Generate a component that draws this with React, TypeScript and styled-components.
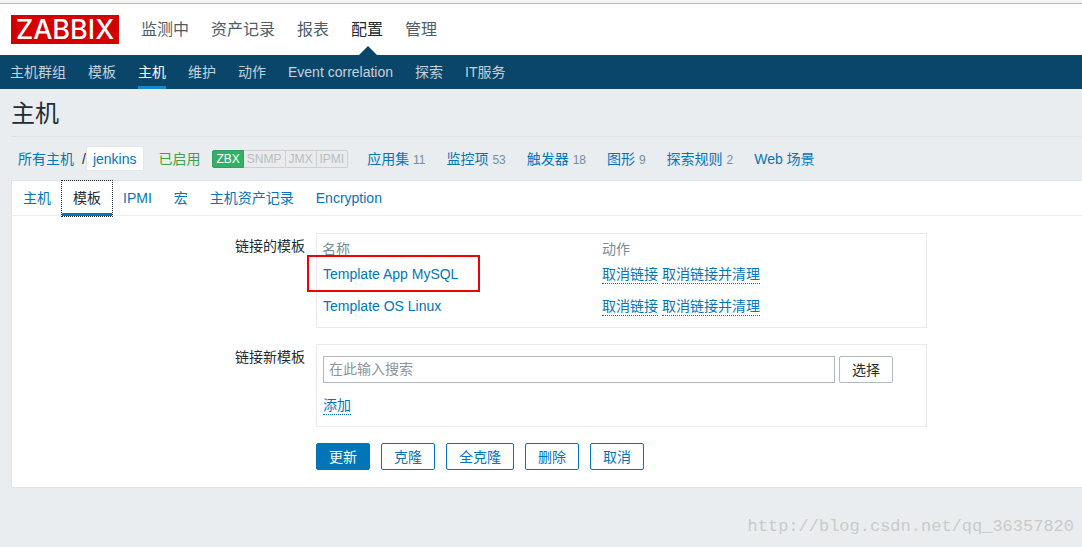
import React from "react";
import styled, { createGlobalStyle } from "styled-components";

const GlobalStyle = createGlobalStyle`
  *, *::before, *::after { box-sizing: border-box; }
  body {
    margin: 0;
    background: #e9edf0;
    color: #1f2c33;
    font: 14px/20px "Liberation Sans", "Noto Sans CJK SC", sans-serif;
  }
  a { color: #0275b8; text-decoration: none; }
`;

const Page = styled.div`
  display: flex;
  flex-direction: column;
  min-height: 100vh;
`;

const WindowEdge = styled.div`
  height: 4px;
  background: #f4f4f4;
  border-bottom: 1px solid #bcbcbc;
`;

const TopBar = styled.header`
  display: flex;
  align-items: center;
  gap: 22px;
  height: 51px;
  padding-left: 11px;
  background: #fff;
`;

const Logo = styled.a`
  display: block;
  width: 108px;
  height: 29px;
  background: #d40000;
  color: #fff;
  font: 500 27px/29px Inter, sans-serif;
  text-align: center;
  white-space: nowrap;
`;

const MainMenu = styled.nav`
  display: flex;
  gap: 22px;
  align-self: stretch;
`;

const MainItem = styled.a<{ $active?: boolean }>`
  position: relative;
  color: ${(p) => (p.$active ? "#1f2c33" : "#4f5d66")};
  font-size: 16px;
  line-height: 51px;
  white-space: nowrap;

  &::after {
    content: "";
    display: ${(p) => (p.$active ? "block" : "none")};
    position: absolute;
    bottom: 0;
    left: 50%;
    margin-left: -8px;
    border: 9px solid transparent;
    border-top-width: 0;
    border-bottom-color: #0a466a;
  }
`;

const SubMenu = styled.nav`
  display: flex;
  gap: 22px;
  height: 34px;
  padding-left: 10px;
  background: #0a466a;
`;

const SubItem = styled.a<{ $active?: boolean }>`
  height: 34px;
  border-bottom: 3px solid ${(p) => (p.$active ? "#1488c9" : "transparent")};
  color: ${(p) => (p.$active ? "#fff" : "#c5d3dc")};
  line-height: 34px;
  white-space: nowrap;
`;

const Content = styled.main`
  padding-left: 11px;
`;

const Title = styled.h1`
  margin: 0;
  height: 48px;
  border-bottom: 1px solid #dfe4e7;
  font-size: 24px;
  font-weight: 400;
  line-height: 50px;
`;

const HostBar = styled.div`
  display: flex;
  align-items: center;
  gap: 12px;
  height: 43px;
  padding-left: 7px;
  white-space: nowrap;
`;

const Crumbs = styled.div`
  display: flex;
  align-items: center;
`;

const Slash = styled.span`
  padding-left: 8px;
`;

const HostName = styled.a`
  padding: 1px 7px 0 6px;
  border: 1px solid #e2e7ea;
  border-radius: 2px;
  background: #fff;
  line-height: 22px;
`;

const Enabled = styled.span`
  padding-left: 2px;
  color: #429e47;
`;

const Badges = styled.div`
  display: flex;
`;

const Badge = styled.span<{ $on?: boolean }>`
  height: 18px;
  padding: 0 3px;
  border: 1px solid ${(p) => (p.$on ? "#2f9f5e" : "#c8d1d6")};
  border-left-width: ${(p) => (p.$on ? "1px" : "0")};
  background: ${(p) => (p.$on ? "#34af67" : "#ebebeb")};
  color: ${(p) => (p.$on ? "#fff" : "#b3bfc6")};
  font-size: 12px;
  line-height: 17px;

  &:first-child { border-radius: 2px 0 0 2px; }
  &:last-child { border-radius: 0 2px 2px 0; }
`;

const HostLinks = styled.nav`
  display: flex;
  gap: 21px;
  padding: 2px 0 0 7px;
`;

const Count = styled.span`
  color: #768d99;
  font-size: 12px;
`;

const Card = styled.section`
  border: 1px solid #dfe4e7;
  border-right: 0;
  background: #fff;
`;

const Tabs = styled.nav`
  display: flex;
  height: 35px;
  border-bottom: 1px solid #ebeef0;
`;

const Tab = styled.a<{ $active?: boolean }>`
  height: 35px;
  padding: 0 11px;
  border-bottom: 3px solid ${(p) => (p.$active ? "#0275b8" : "transparent")};
  outline: ${(p) => (p.$active ? "1px dotted #1f2c33" : "none")};
  color: ${(p) => (p.$active ? "#1f2c33" : "#0275b8")};
  line-height: 34px;
  white-space: nowrap;
`;

const Form = styled.form`
  display: grid;
  grid-template-columns: 293px minmax(0, 611px);
  column-gap: 11px;
  row-gap: 16px;
  padding: 17px 0;
`;

const FieldName = styled.label`
  padding-top: 3px;
  text-align: right;
`;

const Box = styled.div`
  border: 1px solid #ebebeb;
`;

const LinkedBox = styled(Box)`
  height: 95px;
  padding: 5px;
`;

const SearchBox = styled(Box)`
  height: 83px;
  padding: 11px 6px;
`;

const TemplateTable = styled.table`
  width: 100%;
  border-collapse: collapse;
  table-layout: fixed;

  th {
    height: 20px;
    padding: 0;
    color: #768d99;
    font-weight: 400;
    text-align: left;
  }
  th:first-child { width: 280px; }
  td {
    height: 32px;
    padding: 0 0 2px 0;
  }
`;

const NameCell = styled.td`
  position: relative;

  a { padding-left: 1px; }
`;

const Highlight = styled.span`
  position: absolute;
  top: -4px;
  left: -15px;
  width: 173px;
  height: 37px;
  border: 2px solid #f20000;
  pointer-events: none;
`;

const ActionLink = styled.button`
  height: 18px;
  margin: 0 4px 0 0;
  padding: 0 0 2px;
  border: 0;
  border-bottom: 1px dotted #0275b8;
  background: none;
  color: #0275b8;
  font: inherit;
  line-height: 16px;
  vertical-align: middle;
`;

const SearchRow = styled.div`
  display: flex;
  gap: 4px;
  margin-bottom: 12px;
`;

const SearchInput = styled.input`
  flex: 0 1 512px;
  min-width: 0;
  height: 27px;
  padding: 0 5px 1px;
  border: 1px solid #acbbc2;
  color: #1f2c33;
  font: inherit;

  &::placeholder { color: #8a949a; opacity: 1; }
`;

const Button = styled.button<{ $kind?: "primary" | "plain" }>`
  height: 27px;
  padding: 0 12px;
  border: 1px solid ${(p) => (p.$kind === "plain" ? "#acbbc2" : "#0275b8")};
  border-radius: 2px;
  background: ${(p) => (p.$kind === "primary" ? "#0275b8" : "#fff")};
  color: ${(p) =>
    p.$kind === "primary" ? "#fff" : p.$kind === "plain" ? "#1f2c33" : "#0275b8"};
  font: inherit;
  white-space: nowrap;
`;

const Buttons = styled.div`
  display: flex;
  grid-column: 2;
  gap: 11px;
`;

const Watermark = styled.footer`
  margin-top: auto;
  padding: 0 8px 10px 0;
  color: #c9cbc8;
  font: 17px/20px "Liberation Mono", monospace;
  text-align: right;
`;

const mainItems = ["监测中", "资产记录", "报表", "配置", "管理"];
const subItems = ["主机群组", "模板", "主机", "维护", "动作", "Event correlation", "探索", "IT服务"];
const hostLinks: { name: string; count?: number }[] = [
  { name: "应用集", count: 11 },
  { name: "监控项", count: 53 },
  { name: "触发器", count: 18 },
  { name: "图形", count: 9 },
  { name: "探索规则", count: 2 },
  { name: "Web 场景" },
];
const tabs = ["主机", "模板", "IPMI", "宏", "主机资产记录", "Encryption"];
const templates = [
  { name: "Template App MySQL", marked: true },
  { name: "Template OS Linux", marked: false },
];

export default function App() {
  return (
    <Page>
      <GlobalStyle />
      <WindowEdge />
      <TopBar>
        <Logo href="#">ZABBIX</Logo>
        <MainMenu>
          {mainItems.map((item) => (
            <MainItem key={item} href="#" $active={item === "配置"}>{item}</MainItem>
          ))}
        </MainMenu>
      </TopBar>
      <SubMenu>
        {subItems.map((item) => (
          <SubItem key={item} href="#" $active={item === "主机"}>{item}</SubItem>
        ))}
      </SubMenu>
      <Content>
        <Title>主机</Title>
        <HostBar>
          <Crumbs>
            <a href="#">所有主机</a>
            <Slash>/</Slash>
            <HostName href="#">jenkins</HostName>
          </Crumbs>
          <Enabled>已启用</Enabled>
          <Badges>
            <Badge $on>ZBX</Badge>
            <Badge>SNMP</Badge>
            <Badge>JMX</Badge>
            <Badge>IPMI</Badge>
          </Badges>
          <HostLinks>
            {hostLinks.map((link) => (
              <span key={link.name}>
                <a href="#">{link.name}</a>
                {link.count !== undefined && <> <Count>{link.count}</Count></>}
              </span>
            ))}
          </HostLinks>
        </HostBar>
        <Card>
          <Tabs>
            {tabs.map((tab) => (
              <Tab key={tab} href="#" $active={tab === "模板"}>{tab}</Tab>
            ))}
          </Tabs>
          <Form onSubmit={(e) => e.preventDefault()}>
            <FieldName as="span" id="linked">链接的模板</FieldName>
            <LinkedBox>
              <TemplateTable aria-labelledby="linked">
                <thead>
                  <tr>
                    <th>名称</th>
                    <th>动作</th>
                  </tr>
                </thead>
                <tbody>
                  {templates.map((t) => (
                    <tr key={t.name}>
                      <NameCell>
                        <a href="#">{t.name}</a>
                        {t.marked && <Highlight />}
                      </NameCell>
                      <td>
                        <ActionLink type="button">取消链接</ActionLink>
                        <ActionLink type="button">取消链接并清理</ActionLink>
                      </td>
                    </tr>
                  ))}
                </tbody>
              </TemplateTable>
            </LinkedBox>
            <FieldName htmlFor="search">链接新模板</FieldName>
            <SearchBox>
              <SearchRow>
                <SearchInput id="search" type="text" placeholder="在此输入搜索" />
                <Button type="button" $kind="plain">选择</Button>
              </SearchRow>
              <ActionLink type="button">添加</ActionLink>
            </SearchBox>
            <Buttons>
              <Button type="submit" $kind="primary">更新</Button>
              <Button type="button">克隆</Button>
              <Button type="button">全克隆</Button>
              <Button type="button">删除</Button>
              <Button type="button">取消</Button>
            </Buttons>
          </Form>
        </Card>
      </Content>
      <Watermark>http://blog.csdn.net/qq_36357820</Watermark>
    </Page>
  );
}
